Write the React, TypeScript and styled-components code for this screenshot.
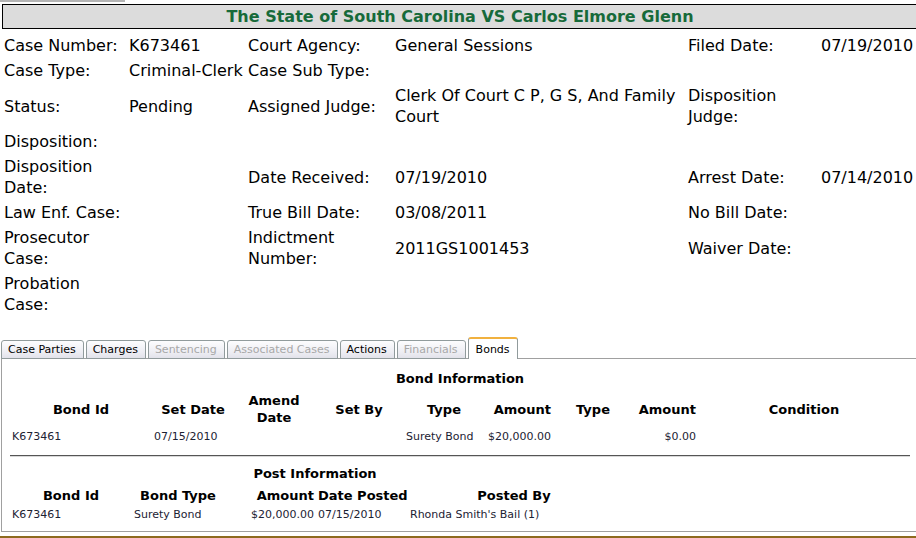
import React from "react";
import styled, { createGlobalStyle } from "styled-components";

const Global = createGlobalStyle`
  html, body { margin: 0; padding: 0; overflow: hidden; background: #fff; }
  body { font-family: "DejaVu Sans", Verdana, sans-serif; color: #000; width: 916px; height: 538px; }
`;

const Page = styled.div`
  width: 916px;
  height: 538px;
  overflow: hidden;
  display: flex;
  flex-direction: column;
`;

const TopBar = styled.div`
  width: 125px;
  height: 2px;
  background: #b4b4b4;
  margin-bottom: 2px;
  flex: none;
`;

const TitleBox = styled.div`
  margin-left: 2px;
  width: 914px;
  flex: none;
  height: 23px;
  border: 1px solid #000;
  background: #dcdcdc;
  color: #176a3a;
  font-weight: bold;
  font-size: 16px;
  line-height: 23px;
  text-align: center;
  white-space: nowrap;
`;

const InfoGrid = styled.div`
  margin-top: 4px;
  margin-left: 2px;
  display: grid;
  grid-template-columns: 125px 119px 147px 293px 133px 110px;
  align-items: center;
  font-size: 16px;
  line-height: 21px;
  width: 927px;
  flex: none;
`;

const Cell = styled.div<{ $nowrap?: boolean }>`
  padding: 2px;
  min-height: 21px;
  white-space: ${(p) => (p.$nowrap ? "nowrap" : "normal")};
`;

const Tabs = styled.div`
  margin-top: 21px;
  margin-left: 1px;
  display: flex;
  align-items: flex-end;
  gap: 2px;
  height: 21px;
  position: relative;
  z-index: 1;
  flex: none;
`;

const Tab = styled.div<{ $active?: boolean; $disabled?: boolean }>`
  font-size: 11px;
  line-height: 16px;
  height: ${(p) => (p.$active ? "18px" : "16px")};
  padding: ${(p) => (p.$active ? "2px 7px 0 7px" : "1px 7px 0 6px")};
  border: 1px solid #919b9c;
  border-bottom: ${(p) => (p.$active ? "none" : "1px solid #919b9c")};
  border-top: ${(p) => (p.$active ? "2px solid #f1b13f" : "1px solid #919b9c")};
  border-radius: 3px 3px 0 0;
  background: ${(p) =>
    p.$active ? "#fff" : "linear-gradient(#fdfdfe, #ececf2 70%, #e2e2ea)"};
  color: ${(p) => (p.$disabled ? "#a8a8a8" : "#000")};
  box-sizing: content-box;
  white-space: nowrap;
  display: flex;
  align-items: center;
`;

const Panel = styled.div`
  margin-left: 1px;
  margin-top: -1px;
  width: 930px;
  height: 174px;
  flex: none;
  border: 1px solid #a0a0a0;
  border-right: none;
  box-sizing: border-box;
  padding: 12px 0 0 8px;
`;

const Table = styled.table<{ $w: number }>`
  width: ${(p) => p.$w}px;
  border-collapse: collapse;
  table-layout: fixed;
`;

const Caption = styled.caption`
  font-size: 13px;
  font-weight: bold;
  line-height: 16px;
  padding-bottom: 3px;
  text-align: center;
  white-space: nowrap;
`;

const Th = styled.th<{ $align?: string; $wrap?: boolean }>`
  font-size: 13px;
  font-weight: bold;
  line-height: 17px;
  padding: 2px;
  text-align: ${(p) => p.$align || "center"};
  vertical-align: middle;
  white-space: ${(p) => (p.$wrap ? "normal" : "nowrap")};
`;

const Td = styled.td<{ $align?: string }>`
  font-size: 11px;
  line-height: 14px;
  padding: 2px 2px 1px;
  color: #1c2233;
  text-align: ${(p) => p.$align || "left"};
  white-space: nowrap;
`;

const Rule = styled.div`
  width: 900px;
  height: 1px;
  background: #555;
  border-bottom: 1px solid #d8d8d8;
  margin: 10px 0 9px;
`;

const BottomLine = styled.div`
  margin-top: 4px;
  height: 2px;
  background: #8d6a1e;
  width: 916px;
  flex: none;
`;

const rows: string[][] = [
  ["Case Number:", "K673461", "Court Agency:", "General Sessions", "Filed Date:", "07/19/2010"],
  ["Case Type:", "Criminal-Clerk", "Case Sub Type:", "", "", ""],
  ["Status:", "Pending", "Assigned Judge:", "Clerk Of Court C P, G S, And Family Court", "Disposition Judge:", ""],
  ["Disposition:", "", "", "", "", ""],
  ["Disposition Date:", "", "Date Received:", "07/19/2010", "Arrest Date:", "07/14/2010"],
  ["Law Enf. Case:", "", "True Bill Date:", "03/08/2011", "No Bill Date:", ""],
  ["Prosecutor Case:", "", "Indictment Number:", "2011GS1001453", "Waiver Date:", ""],
  ["Probation Case:", "", "", "", "", ""],
];

const tabs = [
  { label: "Case Parties" },
  { label: "Charges" },
  { label: "Sentencing", disabled: true },
  { label: "Associated Cases", disabled: true },
  { label: "Actions" },
  { label: "Financials", disabled: true },
  { label: "Bonds", active: true },
];

const bondCols = [142, 82, 80, 90, 80, 69, 80, 65, 212];
const postCols = [122, 92, 92, 92, 212];

export default function App() {
  return (
    <Page>
      <Global />
      <TopBar />
      <TitleBox>The State of South Carolina VS Carlos Elmore Glenn</TitleBox>
      <InfoGrid>
        {rows.map((r, i) =>
          r.map((c, j) => (
            <Cell key={`${i}-${j}`} $nowrap={j === 1 || j === 5}>
              {c}
            </Cell>
          ))
        )}
      </InfoGrid>
      <Tabs>
        {tabs.map((t) => (
          <Tab key={t.label} $active={t.active} $disabled={t.disabled}>
            {t.label}
          </Tab>
        ))}
      </Tabs>
      <Panel>
        <Table $w={900}>
          <Caption>Bond Information</Caption>
          <colgroup>
            {bondCols.map((w, i) => (
              <col key={i} style={{ width: w }} />
            ))}
          </colgroup>
          <thead>
            <tr>
              <Th>Bond Id</Th>
              <Th>Set Date</Th>
              <Th $wrap>Amend Date</Th>
              <Th>Set By</Th>
              <Th>Type</Th>
              <Th $align="right">Amount</Th>
              <Th>Type</Th>
              <Th $align="right">Amount</Th>
              <Th>Condition</Th>
            </tr>
          </thead>
          <tbody>
            <tr>
              <Td>K673461</Td>
              <Td>07/15/2010</Td>
              <Td></Td>
              <Td></Td>
              <Td>Surety Bond</Td>
              <Td $align="right">$20,000.00</Td>
              <Td></Td>
              <Td $align="right">$0.00</Td>
              <Td></Td>
            </tr>
          </tbody>
        </Table>
        <Rule />
        <Table $w={610}>
          <Caption>Post Information</Caption>
          <colgroup>
            {postCols.map((w, i) => (
              <col key={i} style={{ width: w }} />
            ))}
          </colgroup>
          <thead>
            <tr>
              <Th>Bond Id</Th>
              <Th>Bond Type</Th>
              <Th $align="right">Amount</Th>
              <Th $align="left">Date Posted</Th>
              <Th>Posted By</Th>
            </tr>
          </thead>
          <tbody>
            <tr>
              <Td>K673461</Td>
              <Td>Surety Bond</Td>
              <Td $align="right">$20,000.00</Td>
              <Td>07/15/2010</Td>
              <Td>Rhonda Smith's Bail (1)</Td>
            </tr>
          </tbody>
        </Table>
      </Panel>
      <BottomLine />
    </Page>
  );
}
